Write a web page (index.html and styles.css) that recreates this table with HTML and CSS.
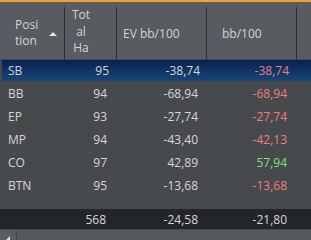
FILE: index.html
```html
<!DOCTYPE html>
<html>
<head>
<meta charset="utf-8">
<link rel="stylesheet" href="styles.css">
</head>
<body>
<div class="panel">
  <div class="accent"></div>
  <div class="head grid">
    <div class="hc hc-pos"><span class="two">Posi<br>tion</span><span class="sort"></span></div>
    <div class="hc hc-tot"><span class="three">Tot<br>al<br>Ha</span></div>
    <div class="hc hc-ev">EV bb/100</div>
    <div class="hc hc-bb">bb/100</div>
    <div class="hc hc-rest"></div>
  </div>
  <div class="body">
    <div class="row grid sel"><div class="c pos">SB</div><div class="c num">95</div><div class="c num ev">-38,74</div><div class="c num bb neg">-38,74</div><div></div></div>
    <div class="row grid"><div class="c pos">BB</div><div class="c num">94</div><div class="c num ev">-68,94</div><div class="c num bb neg">-68,94</div><div></div></div>
    <div class="row grid"><div class="c pos">EP</div><div class="c num">93</div><div class="c num ev">-27,74</div><div class="c num bb neg">-27,74</div><div></div></div>
    <div class="row grid"><div class="c pos">MP</div><div class="c num">94</div><div class="c num ev">-43,40</div><div class="c num bb neg">-42,13</div><div></div></div>
    <div class="row grid"><div class="c pos">CO</div><div class="c num">97</div><div class="c num ev">42,89</div><div class="c num bb pos-val">57,94</div><div></div></div>
    <div class="row grid"><div class="c pos">BTN</div><div class="c num">95</div><div class="c num ev">-13,68</div><div class="c num bb neg">-13,68</div><div></div></div>
  </div>
  <div class="foot grid"><div class="c"></div><div class="c num ft">568</div><div class="c num ev ft2">-24,58</div><div class="c num bb ft3">-21,80</div><div></div></div>
  <div class="scroll"><div class="sbtn"><span class="larr"></span></div><div class="track"></div></div>
</div>
</body>
</html>
```
FILE: styles.css
```css
html, body {
  margin: 0;
  padding: 0;
  background: #474a4d;
}
.panel {
  width: 311px;
  height: 240px;
  display: flex;
  flex-direction: column;
  font-family: "Open Sans", "Noto Sans", sans-serif;
  font-size: 12px;
  color: #d6d6d6;
  overflow: hidden;
}
.accent {
  height: 2px;
  background: #eca236;
  flex: none;
}
.grid {
  display: grid;
  grid-template-columns: 65px 52px 90px 90px 1fr;
}
.head {
  height: 57px;
  background: #585c60;
  flex: none;
  color: #d2d4d6;
}
.hc {
  margin: 5px 0 4px;
  display: flex;
  align-items: center;
  border-right: 1px solid #2b2e31;
  line-height: 16.5px;
}
.hc-rest { border-right: none; }
.hc-pos { padding-left: 15px; padding-top: 1px; }
.two { display: block; }
.sort {
  width: 0;
  height: 0;
  border-left: 4px solid transparent;
  border-right: 4px solid transparent;
  border-bottom: 4px solid #e4e4e4;
  margin-left: 11px;
  margin-top: 2px;
}
.hc-tot { padding-left: 7px; padding-bottom: 2px; }
.three { display: block; width: 18px; text-align: center; }
.hc-ev { padding-left: 6px; padding-top: 2px; }
.hc-bb { padding-left: 15px; padding-top: 2px; }
.body {
  flex: 1;
}
.row {
  height: 23px;
  align-items: center;
}
.row.sel {
  height: 21px;
  margin: 1px 0 1px 2px;
  background: linear-gradient(#072250, #1a4577);
}
.row.sel .pos { padding-left: 6px; }
.c {
  white-space: nowrap;
}
.pos { padding-left: 8px; }
.num { text-align: right; padding-right: 10px; }
.num.ev { padding-right: 9px; }
.num.bb { padding-right: 10px; }
.neg { color: #ef7b7b; }
.pos-val { color: #7ee07e; }
.foot {
  height: 20px;
  background: #222629;
  align-items: center;
  flex: none;
  margin-bottom: 1px;
}
.ft { padding-right: 11px; }
.ft2 { padding-right: 11px; }
.ft3 { padding-right: 11px; }
.scroll {
  height: 10px;
  flex: none;
  display: flex;
  background: #4f5357;
}
.sbtn {
  width: 16px;
  background: #5a5e62;
  display: flex;
  align-items: flex-end;
  justify-content: center;
  border-right: 1px solid #45494c;
}
.larr {
  width: 0;
  height: 0;
  border-top: 4px solid transparent;
  border-right: 4px solid #e0e0e0;
}
.track {
  flex: 1;
  background: #55595d;
}
```
